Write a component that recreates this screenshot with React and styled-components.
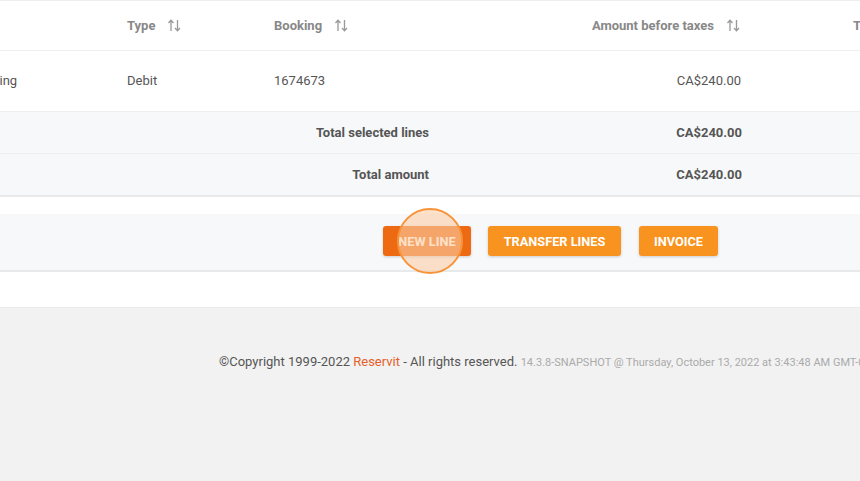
import React from "react";
import styled, { createGlobalStyle } from "styled-components";

const Global = createGlobalStyle`
  html, body { margin: 0; padding: 0; background: #fff; }
  body { font-family: Roboto, "Noto Sans", Arial, sans-serif; overflow: hidden; }
  * { box-sizing: border-box; }
`;

const Page = styled.div`
  width: 860px;
  height: 481px;
  display: flex;
  flex-direction: column;
  overflow: hidden;
`;

const TableViewport = styled.div`
  overflow: hidden;
  border-top: 1px solid #efefef;
`;

const Table = styled.div`
  margin-left: -46px;
  width: 1200px;
`;

const Row = styled.div`
  display: grid;
  grid-template-columns: 157px 147px 187px 392px 274px;
  align-items: center;
  height: ${(p) => p.$h}px;
  padding-bottom: ${(p) => p.$pb || 0}px;
  background: ${(p) => (p.$shade ? "#f7f8fa" : "#fff")};
  border-bottom: ${(p) => p.$bw || 1}px solid ${(p) => (p.$bw ? "#e8e9ea" : "#efefef")};
`;

const Cell = styled.div`
  padding: ${(p) => (p.$right ? "0 16px 0 0" : "0 0 0 16px")};
  padding-right: ${(p) => (p.$pr != null ? p.$pr + "px" : undefined)};
  text-align: ${(p) => (p.$right ? "right" : "left")};
  font-size: 13px;
  color: #555;
  font-weight: ${(p) => (p.$bold ? 700 : 400)};
  white-space: nowrap;
`;

const HeadCell = styled(Cell)`
  color: #888;
  font-weight: 700;
  display: flex;
  align-items: center;
  justify-content: ${(p) => (p.$right ? "flex-end" : "flex-start")};
  gap: 12px;
`;

const SortIcon = () => (
  <svg width="15" height="15" viewBox="0 0 15 15" fill="none" stroke="#999" strokeWidth="1.3">
    <path d="M4 13V2.5M1.5 5L4 2.3L6.5 5" />
    <path d="M10.5 2v10.5M8 10L10.5 12.7L13 10" />
  </svg>
);

const Spacer = styled.div`
  height: 17px;
`;

const ActionBar = styled.div`
  height: 58px;
  background: #f7f8fa;
  border-bottom: 2px solid #e8e9ea;
  display: flex;
  align-items: center;
  padding: 0 0 2px 383px;
`;

const Button = styled.button`
  position: relative;
  height: 30px;
  width: ${(p) => p.$w}px;
  margin-right: ${(p) => p.$mr || 0}px;
  border: none;
  border-radius: 3px;
  background: ${(p) => (p.$pressed ? "#ee6a12" : "#f7931e")};
  color: #fff;
  font-family: Roboto, Arial, sans-serif;
  font-size: 12.75px;
  font-weight: 700;
  text-transform: uppercase;
  box-shadow: 0 1px 3px rgba(0, 0, 0, 0.18);
  padding: 0;
  cursor: pointer;
`;

const Ripple = styled.span`
  position: absolute;
  left: 50%;
  top: 50%;
  width: 66px;
  height: 66px;
  margin: -33px 0 0 -30px;
  border-radius: 50%;
  background: rgba(252, 205, 165, 0.6);
  border: 2px solid #f7943a;
  pointer-events: none;
`;

const WhiteGap = styled.div`
  height: 36px;
  border-bottom: 1px solid #ebebeb;
`;

const Footer = styled.div`
  flex: 1;
  background: #f2f2f2;
  padding: 46px 0 0 219px;
  white-space: nowrap;
  font-size: 13px;
  color: #555;
`;

const Brand = styled.span`
  color: #e5602a;
`;

const Version = styled.span`
  font-size: 11px;
  color: #aaa;
`;

export default function App() {
  return (
    <Page>
      <Global />
      <TableViewport>
        <Table>
          <Row $h={50}>
            <HeadCell>Item</HeadCell>
            <HeadCell>
              Type <SortIcon />
            </HeadCell>
            <HeadCell>
              Booking <SortIcon />
            </HeadCell>
            <HeadCell $right $pr={96}>
              Amount before taxes <SortIcon />
            </HeadCell>
            <HeadCell>Taxes</HeadCell>
          </Row>
          <Row $h={61} $pb={2}>
            <Cell>Booking</Cell>
            <Cell>Debit</Cell>
            <Cell>1674673</Cell>
            <Cell $right $pr={96}>CA$240.00</Cell>
            <Cell />
          </Row>
          <Row $h={42} $shade>
            <Cell />
            <Cell />
            <Cell $right $bold>Total selected lines</Cell>
            <Cell $right $bold $pr={95}>CA$240.00</Cell>
            <Cell />
          </Row>
          <Row $h={43} $shade $bw={2}>
            <Cell />
            <Cell />
            <Cell $right $bold>Total amount</Cell>
            <Cell $right $bold $pr={95}>CA$240.00</Cell>
            <Cell />
          </Row>
        </Table>
      </TableViewport>
      <Spacer />
      <ActionBar>
        <Button $w={88} $mr={17} $pressed>
          New line
          <Ripple />
        </Button>
        <Button $w={133} $mr={18}>Transfer lines</Button>
        <Button $w={79}>Invoice</Button>
      </ActionBar>
      <WhiteGap />
      <Footer>
        ©Copyright 1999-2022 <Brand>Reservit</Brand> - All rights reserved.{" "}
        <Version>14.3.8-SNAPSHOT @ Thursday, October 13, 2022 at 3:43:48 AM GMT-04:00</Version>
      </Footer>
    </Page>
  );
}
